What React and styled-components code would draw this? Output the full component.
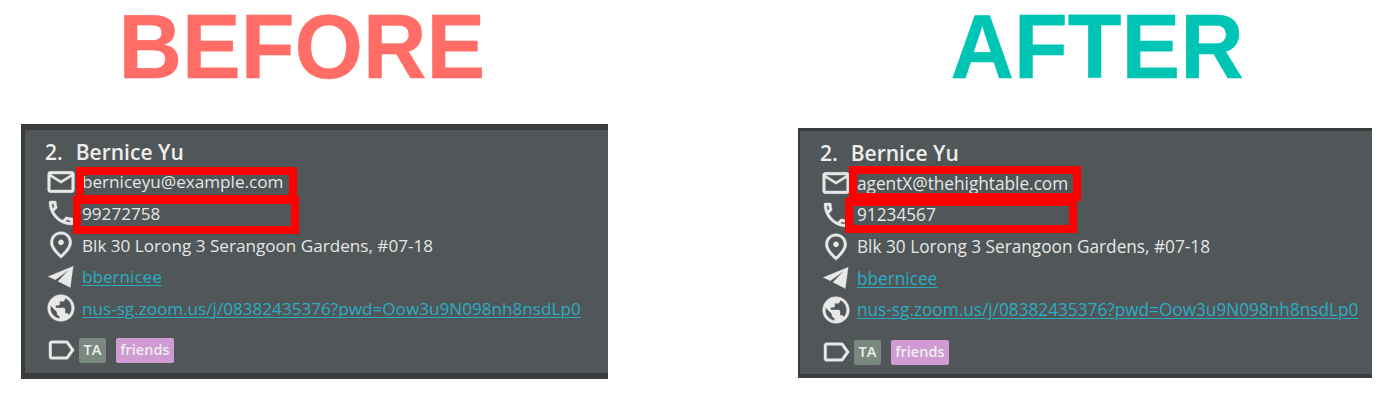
import React from "react";
import styled, { createGlobalStyle } from "styled-components";
import { MdMailOutline, MdOutlinePhone, MdOutlinePlace, MdPublic, MdLabelOutline } from "react-icons/md";

const GlobalStyle = createGlobalStyle`
  * { box-sizing: border-box; }
  body { margin: 0; background: #fff; }
`;

const Page = styled.main`
  display: flex;
  align-items: flex-start;
  gap: 190px;
  width: 1398px;
  height: 400px;
  padding-left: 21px;
`;

const Panel = styled.section`
  width: ${(p) => p.$width}px;
  flex: none;
`;

const Title = styled.h1`
  margin: 0;
  height: ${(p) => p.$height}px;
  padding-left: ${(p) => p.$indent}px;
  font: bold 88px/96px "Liberation Sans", Arial, sans-serif;
  color: ${(p) => p.$color};
  -webkit-text-stroke: 0.4px ${(p) => p.$color};
  white-space: nowrap;

  span {
    display: inline-block;
    transform: scaleY(1.04);
    transform-origin: 0 78px;
  }
`;

const Card = styled.article`
  position: relative;
  height: ${(p) => p.$height}px;
  padding: ${(p) => p.$padding};
  border-style: solid;
  border-color: #3c3c3e;
  border-width: ${(p) => p.$border};
  background: #515658;
  color: #e6e6e6;
  font: ${(p) => p.$fontSize}px/32px "Open Sans", "Noto Sans", sans-serif;
  white-space: nowrap;
`;

const Name = styled.h2`
  display: flex;
  gap: 13px;
  margin: 0;
  height: 31.4px;
  font-size: 21px;
  line-height: 34px;
  font-weight: 600;
  color: #ededed;
`;

const Row = styled.div`
  display: flex;
  align-items: center;
  gap: 5px;
  height: 31.7px;

  > svg {
    flex: none;
    width: 32px;
    height: 32px;
    margin-bottom: 1px;
    color: #e8e8e8;
    stroke: currentColor;
    stroke-width: 0.3px;
  }

  > svg [fill="none"] { stroke: none; }
`;

const Link = styled.a`
  color: #2aacc3;
  text-decoration: underline;
  text-decoration-thickness: 1px;
  text-underline-offset: 2px;
`;

const Tags = styled(Row)`
  margin-top: 10.2px;
  gap: 2px;
`;

const Tag = styled.span`
  height: 25px;
  padding: 0 4.5px;
  border-radius: 2px;
  background: ${(p) => p.$color};
  color: #eeeeee;
  font-size: 14.5px;
  font-weight: 600;
  line-height: 24px;

  & + & { margin-left: 8px; }
`;

const Highlight = styled.div`
  position: absolute;
  left: ${(p) => p.$x}px;
  top: ${(p) => p.$y}px;
  width: ${(p) => p.$w}px;
  height: ${(p) => p.$h}px;
  border: 8px solid #ff0000;
`;

const PlaneIcon = () => (
  <svg viewBox="0 0 32 32" fill="currentColor" aria-hidden="true">
    <path d="M28.2 5.2 3.2 15.6l7.2 3.1L23.8 9.1 13 20.2l12.3 6.4z" />
  </svg>
);

function Contact({ email, phone, highlights, ...card }) {
  return (
    <Card {...card}>
      <Name><span>2.</span><span>Bernice Yu</span></Name>
      <Row><MdMailOutline /><span>{email}</span></Row>
      <Row><MdOutlinePhone /><span>{phone}</span></Row>
      <Row><MdOutlinePlace /><span>Blk 30 Lorong 3 Serangoon Gardens, #07-18</span></Row>
      <Row><PlaneIcon /><Link>bbernicee</Link></Row>
      <Row><MdPublic /><Link>nus-sg.zoom.us/j/08382435376?pwd=Oow3u9N098nh8nsdLp0</Link></Row>
      <Tags>
        <MdLabelOutline />
        <Tag $color="#79897f">TA</Tag>
        <Tag $color="#d09ad2">friends</Tag>
      </Tags>
      {highlights.map(([x, y, w, h]) => (
        <Highlight key={y} $x={x} $y={y} $w={w} $h={h} />
      ))}
    </Card>
  );
}

export default function App() {
  return (
    <>
      <GlobalStyle />
      <Page>
        <Panel $width={587}>
          <Title $color="#ff6d66" $height={124} $indent={97.5}><span>BEFORE</span></Title>
          <Contact
            email="berniceyu@example.com"
            phone="99272758"
            $height={255}
            $fontSize={17.14}
            $border="6px 0 6px 4px"
            $padding="5px 0 0 20px"
            highlights={[[51, 37, 221, 36], [48, 66, 226, 38]]}
          />
        </Panel>
        <Panel $width={574}>
          <Title $color="#00c5b5" $height={128} $indent={152.5}><span>AFTER</span></Title>
          <Contact
            email="agentX@thehightable.com"
            phone="91234567"
            $height={250}
            $fontSize={17.23}
            $border="3px 0 4px 2px"
            $padding="5.4px 0 0 20px"
            highlights={[[49, 35, 232, 35], [45, 67, 232, 35]]}
          />
        </Panel>
      </Page>
    </>
  );
}
